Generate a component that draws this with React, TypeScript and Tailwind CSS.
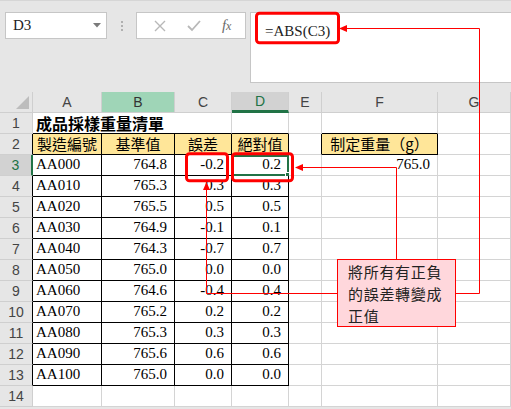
import React from "react";

const COLS = ["A", "B", "C", "D", "E", "F", "G"];
const COL_W = ["w-[69px]", "w-[73px]", "w-[57px]", "w-[57px]", "w-[33px]", "w-[116px]", "w-[73px]"];

const rows = [
  ["AA000", "764.8", "-0.2"],
  ["AA010", "765.3", "0.3"],
  ["AA020", "765.5", "0.5"],
  ["AA030", "764.9", "-0.1"],
  ["AA040", "764.3", "-0.7"],
  ["AA050", "765.0", "0.0"],
  ["AA060", "764.6", "-0.4"],
  ["AA070", "765.2", "0.2"],
  ["AA080", "765.3", "0.3"],
  ["AA090", "765.6", "0.6"],
  ["AA100", "765.0", "0.0"],
];

const serif = "font-['Liberation_Serif','Noto_Sans_CJK_TC',serif]";
const cjk = "font-['Noto_Sans_CJK_TC',sans-serif]";

function Toolbar() {
  return (
    <div className="h-[92px] flex items-start pt-[11px] pl-[5px] border-t border-[#d6d6d6]">
      <div className="w-[102px] h-[27px] bg-white border border-[#c6c6c6] flex items-center justify-between pl-[7px] pr-[5px]">
        <span className={`${serif} text-[15px] text-[#222]`}>D3</span>
        <svg width="8" height="5" viewBox="0 0 8 5">
          <path d="M0 0 H8 L4 4.5 Z" fill="#7a7a7a" />
        </svg>
      </div>
      <div className="ml-[14px] mt-[9px] flex flex-col gap-[2px]">
        <div className="w-[2px] h-[2px] bg-[#b0b0b0]" />
        <div className="w-[2px] h-[2px] bg-[#b0b0b0]" />
        <div className="w-[2px] h-[2px] bg-[#b0b0b0]" />
      </div>
      <div className="ml-[13px] w-[110px] h-[27px] bg-white border border-[#c6c6c6] flex items-center justify-around pl-[6px] pr-[3px]">
        <svg width="12" height="12" viewBox="0 0 12 12">
          <path d="M1 1 L11 11 M11 1 L1 11" stroke="#b8b8b8" strokeWidth="1.4" />
        </svg>
        <svg width="14" height="12" viewBox="0 0 14 12">
          <path d="M1 6 L5 10 L13 1" stroke="#b8b8b8" strokeWidth="1.8" fill="none" />
        </svg>
        <span className="font-['Liberation_Serif',serif] italic text-[15px] text-[#6a6a6a] leading-none">
          f<span className="text-[12px]">x</span>
        </span>
      </div>
      <div className="ml-[4px] flex-1 h-[71px] bg-white border border-r-0 border-[#c6c6c6] pl-[14px] pt-[5px]">
        <span className={`${serif} text-[15px] leading-[22px] text-[#222]`}>=ABS(C3)</span>
      </div>
    </div>
  );
}

function ColumnHeader() {
  return (
    <div className="flex h-[21px]">
      <div className="w-[33px] bg-[#e6e6e6] border-r border-b border-[#cfcfcf] relative">
        <svg className="absolute right-[3px] bottom-[3px]" width="13" height="13" viewBox="0 0 13 13">
          <path d="M13 0 V13 H0 Z" fill="#bdbdbd" />
        </svg>
      </div>
      {COLS.map((c, i) => (
        <div
          key={c}
          className={`${COL_W[i]} flex items-center justify-center text-[14px] font-['Liberation_Sans',sans-serif] border-r ${
            c === "B"
              ? "bg-[#9fd5b7] text-[#333] border-[#cfcfcf] border-b"
              : c === "D"
              ? "bg-[#d2d2d2] text-[#217346] border-[#cfcfcf] border-b-[3px] border-b-[#217346]"
              : "bg-[#e6e6e6] text-[#444] border-[#cfcfcf] border-b"
          }`}
        >
          {c}
        </div>
      ))}
    </div>
  );
}

function RowHeader({ n }: { n: number }) {
  const sel = n === 3;
  const inTable = n >= 2 && n <= 13;
  return (
    <div
      className={`w-[33px] flex items-center justify-center text-[14px] font-['Liberation_Sans',sans-serif] border-b border-b-[#cfcfcf] ${
        sel
          ? "bg-[#d2d2d2] text-[#217346] border-r-2 border-r-[#217346]"
          : inTable
          ? "bg-[#e6e6e6] text-[#444] border-r border-r-black"
          : "bg-[#e6e6e6] text-[#444] border-r border-r-[#cfcfcf]"
      }`}
    >
      {n}
    </div>
  );
}

function Cell({
  w,
  right,
  bottom,
  children,
  align = "right",
  fill,
}: {
  w: string;
  right: boolean;
  bottom: boolean;
  children?: React.ReactNode;
  align?: "left" | "right" | "center";
  fill?: boolean;
}) {
  return (
    <div
      className={`${w} relative flex items-end pb-[1px] text-[15px] leading-[19px] text-black border-r border-b ${
        right ? "border-r-black" : "border-r-[#d4d4d4]"
      } ${bottom ? "border-b-black" : "border-b-[#d4d4d4]"} ${
        align === "right" ? "justify-end pr-[7px]" : align === "center" ? "justify-center" : "justify-start pl-[3px]"
      } ${fill ? "bg-[#ffe699]" : "bg-white"}`}
    >
      {children}
    </div>
  );
}

export default function App() {
  return (
    <div className="w-[511px] h-[409px] relative overflow-hidden bg-[#e6e6e6]">
      <Toolbar />
      <ColumnHeader />

      {/* row 1 */}
      <div className="flex h-[21px]">
        <RowHeader n={1} />
        <div className="w-[199px] bg-white border-r border-b border-r-[#d4d4d4] border-b-black flex items-end pl-[3px]">
          <span className={`${cjk} font-bold text-[16px] leading-[19px]`}>成品採樣重量清單</span>
        </div>
        <Cell w="w-[57px]" right={false} bottom />
        <Cell w="w-[33px]" right={false} bottom={false} />
        <Cell w="w-[116px]" right={false} bottom />
        <Cell w="w-[73px]" right={false} bottom={false} />
      </div>

      {/* row 2 */}
      <div className={`flex h-[21px] ${cjk}`}>
        <RowHeader n={2} />
        <Cell w="w-[69px]" right bottom align="center" fill>
          製造編號
        </Cell>
        <Cell w="w-[73px]" right bottom align="center" fill>
          基準值
        </Cell>
        <Cell w="w-[57px]" right bottom align="center" fill>
          誤差
        </Cell>
        <Cell w="w-[57px]" right bottom align="center" fill>
          絕對值
        </Cell>
        <Cell w="w-[33px]" right bottom={false} />
        <Cell w="w-[116px]" right bottom align="center" fill>
          制定重量（g）
        </Cell>
        <Cell w="w-[73px]" right={false} bottom={false} />
      </div>

      {/* rows 3-13 */}
      {rows.map((r, i) => {
        const n = i + 3;
        const abs = Math.abs(parseFloat(r[2])).toFixed(1);
        return (
          <div key={n} className={`flex h-[21px] ${serif}`}>
            <RowHeader n={n} />
            <Cell w="w-[69px]" right bottom align="left">
              {r[0]}
            </Cell>
            <Cell w="w-[73px]" right bottom>
              {r[1]}
            </Cell>
            <Cell w="w-[57px]" right bottom>
              {r[2]}
            </Cell>
            <Cell w="w-[57px]" right bottom>
              {abs}
              {n === 3 && (
                <div className="absolute left-0 top-0 w-[57px] h-[21px] border-2 border-[#217346]">
                  <div className="absolute right-[-4px] bottom-[-4px] w-[6px] h-[6px] bg-[#217346] border border-white" />
                </div>
              )}
            </Cell>
            <Cell w="w-[33px]" right={false} bottom={false} />
            <Cell w="w-[116px]" right={false} bottom={false}>
              {n === 3 ? "765.0" : null}
            </Cell>
            <Cell w="w-[73px]" right={false} bottom={false} />
          </div>
        );
      })}

      {/* row 14 */}
      <div className="flex h-[21px]">
        <RowHeader n={14} />
        {COLS.map((c, i) => (
          <Cell key={c} w={COL_W[i]} right={false} bottom={false} />
        ))}
      </div>

      {/* annotations */}
      <svg className="absolute left-0 top-0 pointer-events-none" width="511" height="409" viewBox="0 0 511 409">
        <rect x="256.5" y="13.2" width="82" height="29.6" rx="3" fill="none" stroke="#ff0000" strokeWidth="3" />
        <rect x="186.5" y="153.8" width="41" height="27" rx="3" fill="none" stroke="#ff0000" strokeWidth="3" />
        <rect x="232.5" y="153.8" width="60" height="27" rx="3" fill="none" stroke="#ff0000" strokeWidth="3" />
        <path d="M455 293.5 H479.5 V28.5 H345" fill="none" stroke="#ff0000" strokeWidth="1" />
        <polygon points="339,28.5 347,25 347,32" fill="#ff0000" />
        <path d="M396.5 259 V167.5 H301" fill="none" stroke="#ff0000" strokeWidth="1" />
        <polygon points="295,167.5 303,164 303,171" fill="#ff0000" />
        <path d="M337 293.5 H206.5 V188" fill="none" stroke="#ff0000" strokeWidth="1" />
        <polygon points="206.5,182 203,190 210,190" fill="#ff0000" />
      </svg>

      <div
        className={`absolute left-[337px] top-[259px] w-[119px] h-[68px] bg-[#ffd7dc] border border-[#ff0000] pl-[10px] pt-[1px] ${cjk} text-[15px] leading-[22px] tracking-[0.7px] text-[#222]`}
      >
        <div>將所有有正負</div>
        <div>的誤差轉變成</div>
        <div>正值</div>
      </div>
    </div>
  );
}
